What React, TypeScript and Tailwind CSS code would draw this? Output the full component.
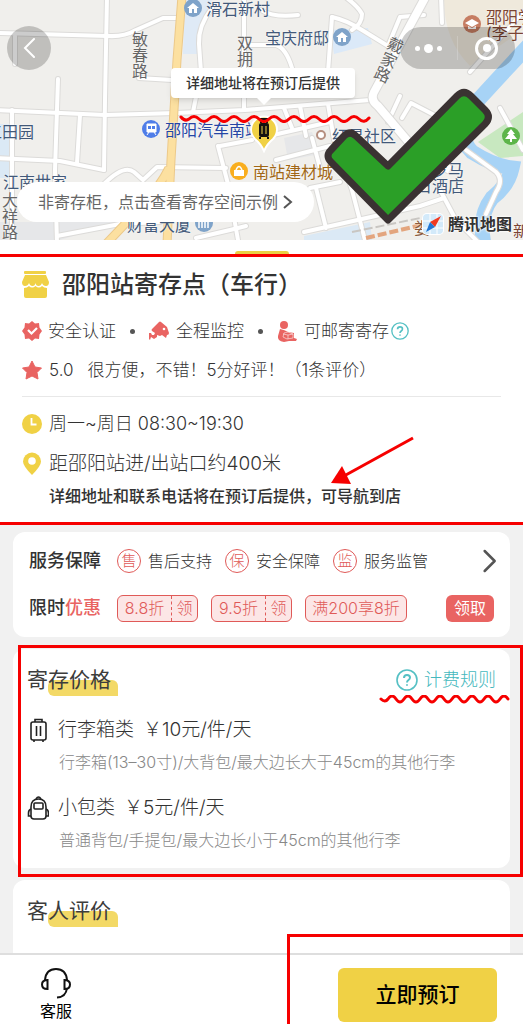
import React from 'react'
import { ChevronRight } from 'lucide-react'

const roads = [
    'M-4 33 L108 36 Q124 37 136 30 L163 18 H180',
    'M107 -4 L105 100 L104 170',
    'M15 36 V64',
    'M58 79 L55 170 L57 244',
    'M-4 110 L105 115 L176 113 L245 110 L370 100',
    'M12 110 V244',
    'M80 115 L77 163',
    'M-4 158 L60 161 L104 170',
    'M139 78 L172 80',
    'M104 184 Q124 164 134 172 L143 180 L157 167 L226 168',
    'M212 8 Q198 26 199 44 L201 72 L193 112',
    'M244 -4 V108',
    'M250 45 H276 Q286 48 292 68',
    'M332 17 L328 72',
    'M332 17 Q346 20 362 30 L388 46',
    'M344 -4 Q358 6 362 14 Q362 24 352 30',
    'M261 10 Q274 18 298 15',
    'M441 -4 L442 23',
    'M424 15 L400 17 L388 46',
    'M400 96 L388 122',
    'M402 118 L411 103 L440 118',
    'M220 146 L252 140 M218 146 L228 184 L238 240',
    'M260 138 L330 122 M276 160 L330 146 M312 138 L320 168',
    'M300 106 L306 136 M328 104 L334 140 M284 108 L292 128',
    'M310 188 L340 182 M316 188 L326 228 M304 232 L420 206 L444 198',
    'M340 156 L352 190 L366 244',
    'M523 12 L470 72',
    'M440 190 L456 220 L480 244',
    'M466 150 L496 172 Q504 180 496 192 L486 214',
    'M57 236 L120 224 L160 222',
    'M196 238 L230 230 L246 226',
    'M500 108 L523 150',
]

const wave = 'q4 -6 8 0 t8 0 t8 0 t8 0 t8 0 t8 0 t8 0 t8 0 t8 0 t8 0 t8 0 t8 0 t8 0 t8 0 t8 0'

function CityMap() {
    return (
        <svg viewBox="0 0 523 240" preserveAspectRatio="xMidYMid slice" className="absolute inset-0 h-full w-full" aria-hidden="true">
            <rect width="523" height="240" fill="#f0efec" />
            <path d="M185 0 H212 L198 30 V54 H183Z" fill="#dfeaf6" />
            <path d="M0 124 H12 V178 H0Z" fill="#dbe9f5" />
            <path d="M330 30 L368 28 L372 44 L334 54Z" fill="#dbe9f8" />
            <path d="M444 0 H523 V30 L470 66 Q444 40 444 0Z" fill="#efe9dc" />
            <path d="M284 138 L312 132 L320 154 L288 160Z M0 222 H120 L60 240 H0Z" fill="#e6e7e9" />
            <path d="M304 236 L370 222 L372 240 H304Z" fill="#dbe9f5" />
            <path d="M478 142 L523 112 V156 L500 158Z" fill="#c8e8c0" />
            {/* River */}
            <path d="M530 44 Q500 76 480 98 Q452 132 472 152 Q494 166 512 168 Q508 186 492 198 Q478 216 484 244" fill="none" stroke="#a7d3f6" strokeWidth="15" />
            {roads.map((d) => (
                <path key={d} d={d} fill="none" stroke="#dcdbd9" strokeWidth="6" strokeLinecap="round" strokeLinejoin="round" />
            ))}
            {roads.map((d) => (
                <path key={d} d={d} fill="none" stroke="#fff" strokeWidth="4" strokeLinecap="round" strokeLinejoin="round" />
            ))}
            <path d="M426 -4 L374 92 Q370 100 378 106 L412 146 L450 170" fill="none" stroke="#dcdbd9" strokeWidth="10" />
            <path d="M426 -4 L374 92 Q370 100 378 106 L412 146 L450 170" fill="none" stroke="#fff" strokeWidth="8" />
            {/* Main road */}
            <path d="M182 -4 L177 60 L171 160 L167 244 M169 168 Q160 186 142 206 L106 244" fill="none" stroke="#ecc98a" strokeWidth="9" />
            <path d="M182 -4 L177 60 L171 160 L167 244 M169 168 Q160 186 142 206 L106 244" fill="none" stroke="#fce0a0" strokeWidth="7" />
            {/* Railway */}
            <path d="M366 238 L434 222" stroke="#e3a57e" strokeWidth="4" strokeDasharray="9 3" />
            <path d="M352 232 L430 216" stroke="#c9c6c2" strokeWidth="2" strokeDasharray="9 3" />
            {/* Place markers */}
            <circle cx="193" cy="8" r="9" fill="#7fa3c9" />
            <path d="M187 8 L193 3 L199 8 H197 V13 H194 V9 H192 V13 H189 V8Z" fill="#fff" />
            <circle cx="342" cy="37" r="9" fill="#7fa3c9" />
            <path d="M336 37 L342 32 L348 37 H346 V42 H343 V38 H341 V42 H338 V37Z" fill="#fff" />
            <circle cx="472" cy="24" r="9" fill="#c67d62" />
            <path d="M465 23 L472 19 L479 23 L472 27Z M468 26 L472 28 L476 26 V29 H468Z" fill="#fff" />
            <circle cx="151" cy="129" r="9" fill="#4f7de8" />
            <path d="M147 124 H156 V132 H147Z M147 135 L149 132 M156 135 L154 132" fill="#fff" stroke="#fff" />
            <path d="M148 126 H151 V129 H148Z M152 126 H155 V129 H152Z" fill="#4f7de8" />
            <circle cx="239" cy="171" r="9" fill="#f9ae1e" />
            <path d="M234 170 H244 V176 H234Z" fill="#fff" />
            <path d="M236 170 Q239 163 242 170" fill="none" stroke="#fff" strokeWidth="1.5" />
            <circle cx="204" cy="223" r="9" fill="#7fa3c9" />
            <path d="M199 228 V222 M202 228 V219 M205 228 V221 M208 228 V219" stroke="#fff" strokeWidth="1.5" />
            <circle cx="511" cy="136" r="9" fill="#5db54a" />
            <path d="M511 129 L515 134 H513 L517 139 H512 V142 H510 V139 H505 L509 134 H507Z" fill="#fff" />
            <circle cx="321" cy="135" r="4" fill="#fff" stroke="#b58f80" strokeWidth="2" />
        </svg>
    )
}

const places = [
    { name: '滑石新村', place: 'left-[206px] top-[1px] text-[#42597a]' },
    { name: '宝庆府邸', place: 'left-[265px] top-[30px] text-[#42597a]' },
    { name: '邵阳学', place: 'left-[486px] top-[9px] text-[#7b4433]' },
    { name: '(李子', place: 'left-[486px] top-[25px] text-[#7b4433]' },
    { name: '工田园', place: '-left-[14px] top-[124px] text-[#42597a]' },
    { name: '邵阳汽车南站', place: 'left-[165px] top-[122px] text-[#2445a4]' },
    { name: '红星社区', place: 'left-[332px] top-[128px] text-[#42597a]' },
    { name: '南站建材城', place: 'left-[253px] top-[164px] text-[#a06715]' },
    { name: '江南世家', place: 'left-[3px] top-[174px] text-[#42597a]' },
    { name: '财富大厦', place: 'left-[127px] top-[217px] text-[#42597a]' },
    { name: '罗马', place: 'left-[432px] top-[162px] text-[#42597a]' },
    { name: '日酒店', place: 'left-[416px] top-[178px] text-[#42597a]' },
    { name: '娄', place: 'left-[414px] top-[220px] text-[#8a5a3c]' },
    { name: '新', place: 'left-[513px] top-[223px] text-[#7b4433]' },
]

const streets = [
    { name: '敏春路', place: 'left-[132px] top-[31px]' },
    { name: '双拥', place: 'left-[237px] top-[35px]' },
    { name: '戴家路', place: 'left-[381px] top-[36px] rotate-[24deg]' },
    { name: '大祥路', place: 'left-[2px] top-[192px]' },
]

function MapHeader() {
    return (
        <header className="relative h-[240px] overflow-hidden">
            <CityMap />
            {places.map((p) => (
                <span key={p.name} className={`absolute whitespace-nowrap text-base leading-4 [text-shadow:0_0_2px_#fff] ${p.place}`}>
                    {p.name}
                </span>
            ))}
            {streets.map((s) => (
                <span key={s.name} className={`absolute w-4 text-base leading-4 break-all text-[#666] [text-shadow:0_0_2px_#fff] ${s.place}`}>
                    {s.name}
                </span>
            ))}

            {/* Selected location */}
            <svg viewBox="0 0 32 42" className="absolute left-[248px] top-[112px] h-[42px] w-8" aria-hidden="true">
                <path d="M16 39 Q13 32 7 27 A13 13 0 1 1 25 27 Q19 32 16 39Z" fill="#f0d145" stroke="#fff" strokeWidth="2" />
                <rect x="11" y="11" width="10" height="14" rx="2" fill="#111" />
                <path d="M13 11 V7 H19 V11 M12 25 V27 M20 25 V27" fill="none" stroke="#111" strokeWidth="2" />
                <path d="M14 14 V22 M18 14 V22" stroke="#f0d145" />
            </svg>
            <div className="absolute left-[171px] top-[68px] flex h-[30px] w-[184px] items-center justify-center rounded bg-white text-sm font-medium text-[#333] shadow-md">
                详细地址将在预订后提供
                <svg viewBox="0 0 14 7" className="absolute left-[86px] top-full h-[7px] w-[14px]" aria-hidden="true">
                    <path d="M0 0 H14 L7 7Z" fill="#fff" />
                </svg>
            </div>
            <svg viewBox="0 0 194 10" className="absolute left-[179px] top-[113px] h-[10px] w-[194px]" aria-hidden="true">
                <path d="M2 4 q4 5 8 2 q5 -5 10 0 t10 0 t10 0 t10 0 t10 0 t10 0 t10 0 t10 0 t10 0 t10 0 t10 0 t10 0 t10 0 t10 0 t10 0 t10 0 t10 0 t10 -1" fill="none" stroke="#f60000" strokeWidth="3" strokeLinecap="round" />
            </svg>

            {/* Top bar */}
            <button aria-label="返回" className="absolute left-[7px] top-[26px] flex h-11 w-11 items-center justify-center rounded-full bg-black/20">
                <svg viewBox="0 0 12 20" className="h-5 w-3" aria-hidden="true">
                    <path d="M11 1 L2 10 L11 19" fill="none" stroke="#fff" strokeWidth="2" strokeLinecap="round" />
                </svg>
            </button>
            <div className="absolute right-2 top-[27px] flex h-[42px] w-[115px] items-center rounded-full bg-black/20">
                <button aria-label="更多" className="flex h-full flex-1 items-center justify-center gap-1">
                    <span className="h-[5px] w-[5px] rounded-full bg-white" />
                    <span className="h-[9px] w-[9px] rounded-full bg-white" />
                    <span className="h-[5px] w-[5px] rounded-full bg-white" />
                </button>
                <span className="h-6 w-px bg-white/20" />
                <button aria-label="关闭" className="flex h-full flex-1 items-center justify-center">
                    <span className="flex h-[23px] w-[23px] items-center justify-center rounded-full border-3 border-white">
                        <span className="h-2 w-2 rounded-full bg-white" />
                    </span>
                </button>
            </div>

            <a href="#space" className="absolute left-[17px] top-[182px] flex h-10 w-[297px] items-center rounded-full bg-white pl-[21px] text-base text-[#666]">
                非寄存柜，点击查看寄存空间示例
                <svg viewBox="0 0 10 16" className="ml-[5px] h-4 w-[10px]" aria-hidden="true">
                    <path d="M1 2 L8 8 L1 14" fill="none" stroke="#555" strokeWidth="2" />
                </svg>
            </a>

            <div className="absolute left-[422px] top-[212px] flex items-center gap-1">
                <svg viewBox="0 0 22 22" className="h-[22px] w-[22px]" aria-hidden="true">
                    <rect width="22" height="22" rx="5" fill="#fff" />
                    <rect x="1" y="1" width="20" height="20" rx="4" fill="#d3eafa" />
                    <path d="M8 1 V21 M15 1 V21 M1 8 H21 M1 15 H21" stroke="#fff" />
                    <path d="M19 3 L8 9 L13 14Z" fill="#f03a22" />
                    <path d="M4 19 L8 9 L13 14Z" fill="#2277d4" />
                </svg>
                <span className="text-base leading-6 font-bold text-[#333] [text-shadow:0_0_2px_#fff,0_0_2px_#fff,0_0_3px_#fff]">腾讯地图</span>
            </div>

            <svg viewBox="320 84 176 144" className="absolute left-[320px] top-[84px] h-[144px] w-[176px]" aria-hidden="true">
                <path
                    d="M356 136 L388 166 L457 96 Q464 89 471 96 L485 110 Q492 117 485 124 L388 220 L331 162 Q325 156 331 150 L344 136 Q350 130 356 136Z"
                    fill="#2b9f27"
                    stroke="#3a3232"
                    strokeWidth="7"
                    strokeLinejoin="round"
                />
            </svg>
        </header>
    )
}

function QuestionIcon({ className }: { className: string }) {
    return (
        <svg viewBox="0 0 22 22" className={className} fill="none" stroke="#55c0c4" strokeWidth="1.6" aria-hidden="true">
            <circle cx="11" cy="11" r="10" />
            <path d="M8 9 Q8 6 11 6 Q14 6 14 8.5 Q14 10 12.5 11 Q11 12 11 13.5" strokeWidth="2" />
            <circle cx="11" cy="16" r="0.6" strokeWidth="1" />
        </svg>
    )
}

function StoreInfo() {
    return (
        <section className="relative border-y-3 border-[#f60000] bg-white px-[22px] pt-3 pb-[14px] text-[#333]">
            <div className="flex items-center">
                <svg viewBox="0 0 27 28" className="h-7 w-[27px]" fill="#f0d145" aria-hidden="true">
                    <rect x="2" y="0" width="22" height="3" rx="1" />
                    <path d="M3 4 H24 L27 11 Q27 15 24 15 Q21 15 20 12 Q19 15 16.5 15 Q14 15 13.5 12 Q13 15 10.5 15 Q8 15 7 12 Q6 15 3 15 Q0 15 0 11Z" />
                    <path d="M2 17 Q5 17 7 15 Q10 18 13.5 15 Q17 18 20 15 Q22 17 25 17 V25 Q25 27 23 27 H4 Q2 27 2 25Z" />
                </svg>
                <h1 className="ml-[13px] text-2xl leading-8 font-medium">邵阳站寄存点（车行）</h1>
            </div>

            <ul className="mt-[18px] flex items-center text-[17px] leading-6 font-light">
                <li className="flex items-center gap-[6px]">
                    <svg viewBox="0 0 20 20" className="h-5 w-5" aria-hidden="true">
                        <path d="M10 0 L13 2.5 L17 2 L17.5 6.5 L20 10 L17.5 13.5 L17 18 L13 17.5 L10 20 L7 17.5 L3 18 L2.5 13.5 L0 10 L2.5 6.5 L3 2 L7 2.5Z" fill="#e96462" />
                        <path d="M6 9 L9.5 12.5 L15 7" fill="none" stroke="#fff" strokeWidth="2.2" />
                    </svg>
                    安全认证
                </li>
                <li aria-hidden="true" className="mx-[14px] h-[5px] w-[5px] rounded-full bg-[#555]" />
                <li className="flex items-center gap-[7px]">
                    <svg viewBox="0 0 20 20" className="h-5 w-5" aria-hidden="true">
                        <path d="M10 1 Q11 0 12 1 L18 6 L20 12 Q20 14 18 14 L17 17 L13 14 L11 15 L8 14 L8 16 L5 18 L2 16 L1 19 L0 18 V12 L2 12 L3 14 H5 L6 12 L3 10 Q2 9 3 8Z" fill="#e96462" />
                        <circle cx="15" cy="8" r="1.3" fill="#fff" />
                    </svg>
                    全程监控
                </li>
                <li aria-hidden="true" className="mx-[14px] h-[5px] w-[5px] rounded-full bg-[#555]" />
                <li className="flex items-center">
                    <svg viewBox="0 0 20 21" className="mr-[7px] h-[21px] w-5" aria-hidden="true">
                        <circle cx="7" cy="4" r="4" fill="#e96462" />
                        <path d="M3 8 Q8 9 11 11 L17 12 V17 L20 18 L19 20 H12 L7 21 Q0 20 1 15Z" fill="#e96462" />
                        <path d="M7 12 L11 11 L16 13 V17 L10 18 L6 16Z M6 13 L11 14 L16 13 M11 14 V18" fill="none" stroke="#fbdcdc" strokeWidth="0.7" />
                    </svg>
                    可邮寄寄存
                    <button aria-label="邮寄说明" className="ml-0.5">
                        <QuestionIcon className="h-[18px] w-[18px]" />
                    </button>
                </li>
            </ul>

            <div className="mt-[15px] flex items-center text-[17px] leading-6 font-light">
                <svg viewBox="0 0 20 20" className="h-5 w-5" aria-hidden="true">
                    <path d="M10 1 L13 7 L19.5 8 L15 12.5 L16 19 L10 16 L4 19 L5 12.5 L0.5 8 L7 7Z" fill="#e96462" stroke="#e96462" strokeLinejoin="round" />
                </svg>
                <span className="ml-[7px]">5.0</span>
                <span className="ml-[14px]">很方便，不错！5分好评！（1条评价）</span>
            </div>

            <hr className="mt-[14px] border-[#e8e8e8]" />

            <div className="mt-[15px] flex items-center gap-[7px] text-lg leading-6 font-light">
                <svg viewBox="0 0 20 20" className="h-5 w-5" aria-hidden="true">
                    <circle cx="10" cy="10" r="10" fill="#f0d145" />
                    <path d="M9.5 4 V10.5 H14.5" fill="none" stroke="#fff" strokeWidth="1.8" />
                </svg>
                周一~周日 08:30~19:30
            </div>
            <div className="mt-4 flex items-center gap-[7px] text-[19px] leading-6 font-light">
                <svg viewBox="0 0 20 24" className="h-6 w-5" aria-hidden="true">
                    <path d="M10 23 Q1 14 1 9.5 A9 9 0 0 1 19 9.5 Q19 14 10 23Z" fill="#f0d145" />
                    <circle cx="10" cy="9" r="3.8" fill="#fff" />
                </svg>
                距邵阳站进/出站口约400米
            </div>
            <p className="mt-2 pl-[27px] text-base leading-6 font-medium">详细地址和联系电话将在预订后提供，可导航到店</p>

            <svg viewBox="330 436 86 50" className="absolute left-[330px] top-[179px] h-[50px] w-[86px]" aria-hidden="true">
                <path d="M413 438 L344 476" stroke="#f60000" strokeWidth="3" />
                <path d="M331 483 L342 466 L351 484Z" fill="#f60000" />
            </svg>
        </section>
    )
}

const guarantees = [
    { mark: '售', text: '售后支持' },
    { mark: '保', text: '安全保障' },
    { mark: '监', text: '服务监管' },
]

function ServiceCard() {
    return (
        <section className="rounded-xl bg-white py-[15px] pr-4 pl-4 text-[#333]">
            <div className="flex h-7 items-center">
                <h2 className="w-[75px] text-lg font-medium">服务保障</h2>
                <ul className="ml-[13px] flex gap-[13px] text-base font-light">
                    {guarantees.map((g) => (
                        <li key={g.mark} className="flex items-center gap-[7px]">
                            <span className="flex h-6 w-6 items-center justify-center rounded-full border border-[#e05a58] text-[15px] text-[#e05a58]">{g.mark}</span>
                            {g.text}
                        </li>
                    ))}
                </ul>
                <button aria-label="查看服务保障" className="-mr-1 ml-auto">
                    <ChevronRight className="h-7 w-5 text-[#555]" viewBox="5 4 12 16" strokeWidth={1.5} />
                </button>
            </div>
            <div className="mt-[19px] flex h-7 items-center">
                <h2 className="w-[75px] text-lg font-medium">
                    限时<span className="text-[#e96462]">优惠</span>
                </h2>
                <div className="ml-[13px] flex gap-[13px] text-base font-light text-[#e05a58]">
                    {['8.8折', '9.5折'].map((c) => (
                        <button key={c} className="flex h-[27px] w-[81px] items-center rounded-md border border-[#e05a58] bg-[#fce6e6]">
                            <span className="flex-1">{c}</span>
                            <span className="flex h-full w-[26px] items-center justify-center border-l border-dashed border-[#e05a58]">领</span>
                        </button>
                    ))}
                    <button className="h-[27px] w-[102px] rounded-md border border-[#e05a58] bg-[#fce6e6]">满200享8折</button>
                </div>
                <button className="ml-auto h-[27px] w-12 rounded-md bg-[#e96462] text-base text-white">领取</button>
            </div>
        </section>
    )
}

function SectionTitle({ children }: { children: React.ReactNode }) {
    return (
        <h2 className="relative isolate w-[91px] text-[21px] leading-8 text-[#3c3c3c]">
            {children}
            <span className="absolute right-0 bottom-0 -z-10 h-4 w-[70px] rounded-md rounded-br-none bg-[#f3d966]" />
        </h2>
    )
}

function PriceCard() {
    return (
        <section className="relative rounded-xl bg-white px-[14px] pt-[15px] pb-4 text-[#333]">
            <div className="flex items-center justify-between">
                <SectionTitle>寄存价格</SectionTitle>
                <a href="#rules" className="flex items-center gap-[6px] text-lg font-light text-[#45b8bd]">
                    <QuestionIcon className="h-[22px] w-[22px]" />
                    计费规则
                </a>
            </div>

            <div className="mt-[22px] flex items-center gap-[9px] text-[19px] leading-6 font-light">
                <svg viewBox="0 0 22 24" className="h-6 w-[22px]" fill="none" stroke="#222" strokeWidth="1.6" aria-hidden="true">
                    <rect x="4" y="4" width="15" height="18" rx="2" />
                    <path d="M8 4 V1.5 H15 V4 M9.500 8 V18 M13.5 8 V18 M7 22 V24 M16 22 V24" />
                </svg>
                <h3>行李箱类</h3>
                <span>￥10元/件/天</span>
            </div>
            <p className="mt-2 pl-[32px] text-base leading-6 font-light text-[#888]">行李箱(13–30寸)/大背包/最大边长大于45cm的其他行李</p>

            <div className="mt-[22px] flex items-center gap-[9px] text-[19px] leading-6 font-light">
                <svg viewBox="0 0 22 24" className="h-6 w-[22px]" fill="none" stroke="#222" strokeWidth="1.6" aria-hidden="true">
                    <path d="M4 11 Q4 3 11.5 3 Q19 3 19 11 V20 Q19 23 16 23 H7 Q4 23 4 20Z" />
                    <path d="M9 3 Q11.5 -1 14 3 M4 13 Q1.5 14 1.5 17 V20 H4 M19 13 Q21.5 14 21.5 17 V20 H19" />
                    <rect x="7" y="7" width="9" height="6" rx="1" />
                </svg>
                <h3>小包类</h3>
                <span>￥5元/件/天</span>
            </div>
            <p className="mt-2 pl-[32px] text-base leading-6 font-light text-[#888]">普通背包/手提包/最大边长小于45cm的其他行李</p>

            <svg viewBox="0 0 132 10" className="absolute right-0 top-[46px] h-[10px] w-[132px]" aria-hidden="true">
                <path d={`M3 4 q4 4 7 0 ${wave}`} fill="none" stroke="#f60000" strokeWidth="3" strokeLinecap="round" />
            </svg>
            {/* Highlight frame */}
            <div className="pointer-events-none absolute -top-1 -right-[13px] -bottom-[9px] left-[5px] border-3 border-[#f60000]" />
        </section>
    )
}

function BookingBar() {
    return (
        <footer className="sticky bottom-0 flex h-[71px] items-start justify-between border-t-2 border-[#dedede] bg-white pt-[13px] pr-[26px] pl-10 text-black">
            <button className="flex flex-col items-center text-base leading-6">
                <svg viewBox="0 0 30 31" className="h-[31px] w-[30px]" fill="none" stroke="#111" strokeWidth="2" aria-hidden="true">
                    <path d="M4 12 Q5 1 15 1 Q25 1 26 12" />
                    <path d="M6.5 12 V21 Q1 21 1 16.5 Q1 12 6.5 12Z M23.5 12 V21 Q29 21 29 16.5 Q29 12 23.5 12Z" />
                    <path d="M26 20 Q25 29 16 29.5" />
                </svg>
                客服
            </button>
            <button className="h-[54px] w-[159px] rounded-md bg-[#f0d145] text-[21px] font-medium">立即预订</button>
            <div className="pointer-events-none absolute -top-[21px] right-0 bottom-0 w-[236px] border-t-3 border-l-3 border-[#f60000]" />
        </footer>
    )
}

export default function App() {
    return (
        <div className="flex min-h-screen flex-col bg-[#f1f1f1] font-['Inter','Noto_Sans_CJK_SC',sans-serif]" lang="zh-CN">
            <MapHeader />
            <div className="flex h-[14px] items-end justify-center bg-white">
                <span className="h-[3px] w-[54px] rounded-t bg-[#ead045]" />
            </div>
            <StoreInfo />
            <main className="flex flex-1 flex-col gap-3 pt-[7px] pr-[13px] pl-[13px]">
                <ServiceCard />
                <PriceCard />
                <section className="flex-1 rounded-t-xl bg-white px-[14px] pt-[15px]">
                    <SectionTitle>客人评价</SectionTitle>
                </section>
            </main>
            <BookingBar />
        </div>
    )
}
